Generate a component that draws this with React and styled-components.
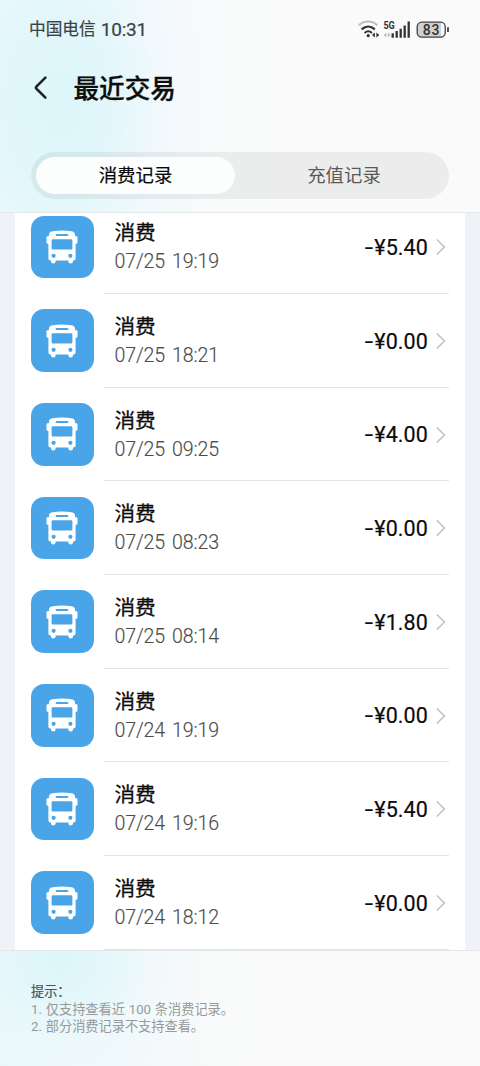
import React from 'react';
import styled, { createGlobalStyle } from 'styled-components';

const GlobalStyle = createGlobalStyle`
  * { box-sizing: border-box; }
  body {
    margin: 0;
    background: #f0f2f7;
    font-family: Roboto, "Noto Sans CJK SC", sans-serif;
    color: #0c0c0c;
  }
`;

const Screen = styled.div`
  width: 480px;
  height: 1066px;
  display: flex;
  flex-direction: column;
  overflow: hidden;
`;

const Header = styled.header`
  height: 213px;
  flex: none;
  display: flex;
  flex-direction: column;
  border-bottom: 1px solid #e4e9eb;
  background:
    radial-gradient(ellipse 150px 240px at 62px 105px, #dcf6fa 0%, rgba(222, 246, 250, 0.8) 30%, rgba(232, 248, 251, 0.35) 65%, rgba(244, 250, 252, 0) 100%),
    linear-gradient(90deg, #eaf8fc 0, #eff8fc 90px, #f6f9fc 160px, #f9fafb 215px, #fafafa 280px);
`;

const StatusBar = styled.div`
  height: 60px;
  padding: 0 30px 0 29px;
  display: flex;
  align-items: center;
  justify-content: space-between;
`;

const Carrier = styled.div`
  display: flex;
  align-items: center;
  gap: 5px;
  font-size: 16.7px;
  line-height: 24px;
  color: #3c4244;
  -webkit-text-stroke: 0.2px #3c4244;
`;

const Clock = styled.span`
  font-size: 19px;
  letter-spacing: -0.2px;
`;

const StatusIcons = styled.svg`
  display: block;
  width: 92px;
  height: 20px;
`;

const TitleBar = styled.div`
  height: 56px;
  padding-left: 33px;
  display: flex;
  align-items: center;
  gap: 25.5px;
`;

const BackIcon = styled.svg`
  width: 15px;
  height: 26px;
`;

const Title = styled.h1`
  margin: 0;
  padding-top: 1px;
  font-size: 25.6px;
  line-height: 36px;
  font-weight: 500;
  -webkit-text-stroke: 0.3px #111;
`;

const Tabs = styled.div`
  flex: none;
  margin: 36px 31px 0;
  height: 47px;
  padding: 5px 0 5px 5px;
  border-radius: 24px;
  background: rgba(0, 0, 0, 0.055);
  display: flex;
`;

const Tab = styled.div`
  flex: none;
  width: ${({ $active }) => ($active ? '199px' : '218px')};
  height: 37px;
  padding-top: 1px;
  border-radius: 19px;
  display: flex;
  align-items: center;
  justify-content: center;
  font-size: 18.4px;
  line-height: 26px;
  color: ${({ $active }) => ($active ? '#080808' : '#595959')};
  background: ${({ $active }) => ($active ? '#fcfdfd' : 'transparent')};
  -webkit-text-stroke: ${({ $active }) => ($active ? '0.2px' : '0')} #080808;
`;

const Viewport = styled.main`
  flex: 1;
  min-height: 0;
  padding: 0 15px;
  overflow: hidden;
`;

const List = styled.div`
  margin-top: -12.6px;
  padding: 0 16px;
  background: #fff;
`;

const Row = styled.div`
  height: 93.66px;
  display: flex;
  align-items: stretch;
`;

const IconTile = styled.div`
  flex: none;
  width: 62.6px;
  height: 62.6px;
  margin: 15.3px 10.4px 0 0;
  border-radius: 13px;
  background: #4aa5e8;
  display: flex;
  align-items: center;
  justify-content: center;
`;

const RowBody = styled.div`
  flex: 1;
  padding: 1px 0 0 10.5px;
  border-bottom: 1px solid #e4e4e4;
  display: flex;
  align-items: center;
`;

const Details = styled.div`
  flex: 1;
  display: flex;
  flex-direction: column;
`;

const Name = styled.div`
  font-size: 20.6px;
  line-height: 30px;
  -webkit-text-stroke: 0.3px #0c0c0c;
`;

const Time = styled.div`
  font-size: 19.6px;
  line-height: 28px;
  font-weight: 300;
  letter-spacing: -0.15px;
  word-spacing: 2.4px;
  color: #4c4c4c;
  -webkit-text-stroke: 0.15px #4c4c4c;
`;

const Amount = styled.div`
  padding-top: 1.5px;
  font-size: 21.5px;
  line-height: 28px;
  letter-spacing: 0.1px;
  -webkit-text-stroke: 0.2px #0c0c0c;
`;

const Minus = styled.span`
  display: inline-block;
  margin-right: 2.2px;
  transform: scaleX(1.4);
`;

const Chevron = styled.svg`
  width: 12px;
  height: 18px;
  margin-left: 7px;
  margin-right: 2px;
`;

const Footer = styled.footer`
  flex: none;
  height: 116px;
  padding: 32px 31px 0;
  border-top: 1px solid #e2e8ea;
  font-size: 13.2px;
  line-height: 17.6px;
  color: #969a9b;
  background:
    radial-gradient(ellipse 140px 130px at 60px 10px, #dcf6f9 0%, rgba(224, 246, 250, 0.75) 30%, rgba(234, 248, 251, 0.3) 65%, rgba(244, 250, 251, 0) 100%),
    linear-gradient(90deg, #ebf8fb 0, #f0f9fb 110px, #f8fafa 200px, #fafafa 260px);
`;

const Hint = styled.div`
  color: ${({ $strong }) => ($strong ? '#4d5556' : 'inherit')};
  -webkit-text-stroke: ${({ $strong }) => ($strong ? '0.2px' : '0')} #4d5556;
  word-spacing: 0.6px;
  white-space: nowrap;
`;

const transactions = [
  { time: '07/25 19:19', amount: '5.40' },
  { time: '07/25 18:21', amount: '0.00' },
  { time: '07/25 09:25', amount: '4.00' },
  { time: '07/25 08:23', amount: '0.00' },
  { time: '07/25 08:14', amount: '1.80' },
  { time: '07/24 19:19', amount: '0.00' },
  { time: '07/24 19:16', amount: '5.40' },
  { time: '07/24 18:12', amount: '0.00' },
];

function StatusGlyphs() {
  return (
    <StatusIcons viewBox="0 0 92 20" fill="none">
      <path d="M0.8 5.2C6.200 0.200 14 0.200 19.400 5.200" stroke="#bcbcbc" strokeWidth="2" />
      <path d="M3.600 9.400C7.600 5.600 12.800 5.600 16.800 9.400" stroke="#333" strokeWidth="2.200" />
      <path d="M6.600 13C8.900 10.900 11.700 10.900 14 13" stroke="#333" strokeWidth="2" />
      <circle cx="10.2" cy="15.7" r="1.6" fill="#333" />
      <path d="M16.900 12.400v5l-2.900-2.500zM18.400 12.400v5l2.900-2.500z" fill="#333" />
      <text x="25.4" y="9.300" fontSize="10" fontWeight="700" fill="#333" fontFamily="Roboto, sans-serif" textLength="11.400" lengthAdjust="spacingAndGlyphs">5G</text>
      <path d="M28.400 12.400v5l-2.700-2.500zM29.900 12.400v5l2.700-2.500z" fill="#bcbcbc" />
      <path d="M34.700 17.700v-4.400M38.700 17.700v-6.600M42.700 17.700V8.800M46.700 17.700V5.400M50.700 17.700V1.600" stroke="#333" strokeWidth="2.300" />
      <rect x="59.200" y="2.200" width="28" height="15" rx="4.600" fill="#fafafa" />
      <path d="M63.800 2.200H83v15H63.800a4.600 4.600 0 0 1-4.600-4.600V6.800a4.600 4.600 0 0 1 4.600-4.600z" fill="#d0d0d0" />
      <rect x="59.200" y="2.200" width="28" height="15" rx="4.600" stroke="#404040" strokeWidth="1.300" />
      <path d="M90 7.300v4.800" stroke="#404040" strokeWidth="1.800" />
      <text x="73.500" y="14.600" fontSize="14" fontWeight="500" textAnchor="middle" letterSpacing="0.800" fill="#333" fontFamily="Roboto, sans-serif">83</text>
    </StatusIcons>
  );
}

function BusIcon() {
  return (
    <svg width="32" height="34" viewBox="0 0 32 34">
      <path
        fill="#fff"
        fillRule="evenodd"
        d="M3 4.200C3.300 2.300 4.400 1.700 6.800 1.300C12.400.2 19.600.2 25.200 1.300C27.600 1.700 28.700 2.300 29 4.200L29.200 6.300H30.400C31.100 6.300 31.500 6.800 31.500 7.400V12.300C31.500 13.600 30.700 14 29.600 14V28.300C29.600 29.700 28.900 30.400 27.600 30.400H27V31.600C27 34.200 22.400 34.200 22.400 31.600V30.400H9.600V31.600C9.600 34.200 5 34.200 5 31.600V30.400H4.400C3.100 30.400 2.400 29.700 2.400 28.300V14C1.300 14 .5 13.600 .5 12.300V7.400C.5 6.800 .9 6.300 1.600 6.300H2.800ZM10.600 4.100A1 1 0 0 0 10.600 6.100H21.400A1 1 0 0 0 21.400 4.100ZM6.800 9.200Q5.600 9.200 5.600 10.400V18.300Q5.600 19.500 6.800 19.500H25.200Q26.400 19.500 26.400 18.300V10.400Q26.400 9.200 25.200 9.200ZM7.600 23.700A2.100 2.100 0 1 0 7.600 27.900A2.100 2.100 0 1 0 7.600 23.700ZM24.400 23.700A2.100 2.100 0 1 0 24.400 27.900A2.100 2.100 0 1 0 24.400 23.700Z"
      />
    </svg>
  );
}

function Transaction({ time, amount }) {
  return (
    <Row>
      <IconTile><BusIcon /></IconTile>
      <RowBody>
        <Details>
          <Name>消费</Name>
          <Time>{time}</Time>
        </Details>
        <Amount><Minus>-</Minus>¥{amount}</Amount>
        <Chevron viewBox="0 0 12 18" fill="none">
          <path d="M2.300 2L9.500 9L2.300 16" stroke="#c3c3c3" strokeWidth="1.700" strokeLinecap="round" strokeLinejoin="round" />
        </Chevron>
      </RowBody>
    </Row>
  );
}

export default function App() {
  return (
    <>
      <GlobalStyle />
      <Screen>
        <Header>
          <StatusBar>
            <Carrier>中国电信<Clock>10:31</Clock></Carrier>
            <StatusGlyphs />
          </StatusBar>
          <TitleBar>
            <BackIcon viewBox="0 0 15 26" fill="none">
              <path d="M12.400 2.600L3.600 11.300Q2.400 12.600 3.600 13.900L12.400 22.600" stroke="#222" strokeWidth="2.600" strokeLinecap="round" />
            </BackIcon>
            <Title>最近交易</Title>
          </TitleBar>
          <Tabs>
            <Tab $active>消费记录</Tab>
            <Tab>充值记录</Tab>
          </Tabs>
        </Header>
        <Viewport>
          <List>
            {transactions.map((item) => (
              <Transaction key={item.time} {...item} />
            ))}
          </List>
        </Viewport>
        <Footer>
          <Hint $strong>提示：</Hint>
          <Hint>1. 仅支持查看近 100 条消费记录。</Hint>
          <Hint>2. 部分消费记录不支持查看。</Hint>
        </Footer>
      </Screen>
    </>
  );
}
